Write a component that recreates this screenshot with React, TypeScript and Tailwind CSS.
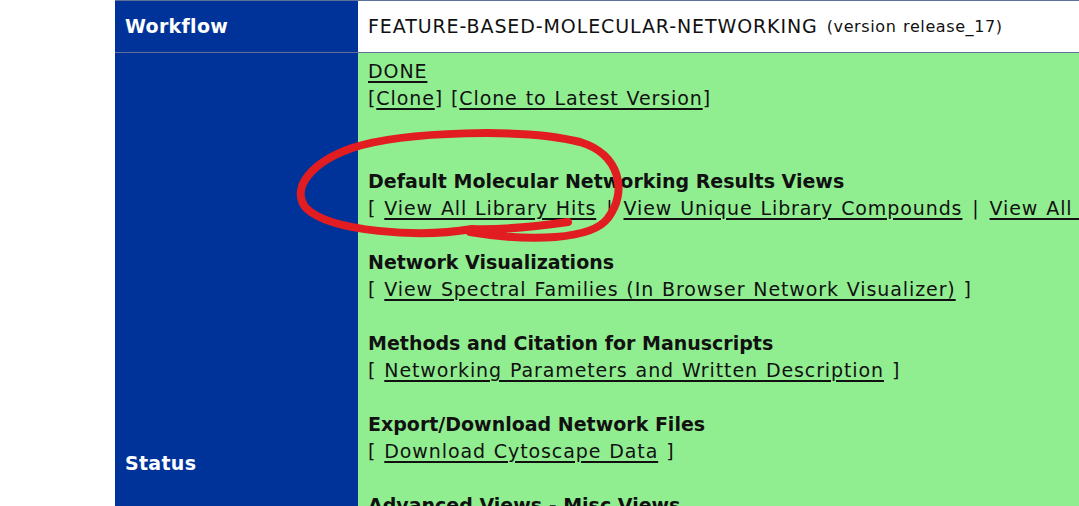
import React from "react";

const Link = ({ children }: { children: React.ReactNode }) => (
  <a className="underline decoration-2 underline-offset-[3px] text-[#111]">{children}</a>
);

const Sep = () => <span className="mx-[2px]">|</span>;

const Section = ({ title, children }: { title: string; children: React.ReactNode }) => (
  <div className="mb-[27px]">
    <div className="font-bold tracking-normal [word-spacing:0px]">{title}</div>
    <div className="whitespace-nowrap">{children}</div>
  </div>
);

export default function App() {
  return (
    <div className="relative w-[1079px] h-[506px] overflow-hidden bg-white font-['DejaVu_Sans',sans-serif] text-[19px] leading-[27px] tracking-[0.9px] [word-spacing:1px] text-[#111]">
      <div className="ml-[115px] flex flex-col border-t border-[#5f7099]">
        <div className="flex h-[52px] border-b border-[#5f7099]">
          <div className="w-[243px] shrink-0 bg-[#003399] px-[10px] flex items-center font-bold tracking-[0.3px] text-white">
            Workflow
          </div>
          <div className="flex-1 bg-white px-[10px] flex items-center whitespace-nowrap">
            FEATURE-BASED-MOLECULAR-NETWORKING
            <span className="ml-[9px] text-[16px] tracking-[0.6px]">(version release_17)</span>
          </div>
        </div>
        <div className="flex h-[820px]">
          <div className="w-[243px] shrink-0 bg-[#003399] px-[10px] flex items-center font-bold tracking-[0.3px] text-white">
            Status
          </div>
          <div className="flex-1 bg-[#90ee90] px-[10px] pt-[5px] overflow-hidden">
            <div>
              <Link>DONE</Link>
            </div>
            <div className="whitespace-nowrap">
              [<Link>Clone</Link>] [<Link>Clone to Latest Version</Link>]
            </div>
            <div className="h-[56px]" />
            <Section title="Default Molecular Networking Results Views">
              [ <Link>View All Library Hits</Link> <Sep /> <Link>View Unique Library Compounds</Link> <Sep />{" "}
              <Link>View All Analog Hits</Link> ]
            </Section>
            <Section title="Network Visualizations">
              [ <Link>View Spectral Families (In Browser Network Visualizer)</Link> ]
            </Section>
            <Section title="Methods and Citation for Manuscripts">
              [ <Link>Networking Parameters and Written Description</Link> ]
            </Section>
            <Section title="Export/Download Network Files">
              [ <Link>Download Cytoscape Data</Link> ]
            </Section>
            <Section title="Advanced Views - Misc Views">
              [ <Link>View All Clusters With IDs</Link> <Sep /> <Link>View Network Pairs</Link> ]
            </Section>
          </div>
        </div>
      </div>
      <svg
        className="absolute left-0 top-0 pointer-events-none"
        width="1079"
        height="506"
        viewBox="0 0 1079 506"
      >
        <path
          d="M 568 222 C 540 226, 500 230, 472 229 C 420 238, 330 232, 306 208 C 290 188, 312 162, 352 148 C 405 131, 525 128, 580 142 C 620 154, 628 192, 608 218 C 592 240, 530 242, 470 232"
          fill="none"
          stroke="#e11d22"
          strokeWidth="8"
          strokeLinecap="round"
          strokeLinejoin="round"
        />
      </svg>
    </div>
  );
}
